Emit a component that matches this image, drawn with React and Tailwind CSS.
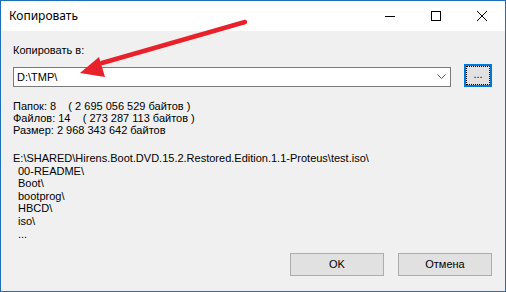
import React from "react";

function TitleBar() {
  return (
    <div className="flex h-[30px] items-center bg-white">
      <span className="ml-[8px] text-[12px] text-black [font-family:'Noto_Sans',sans-serif]">
        Копировать
      </span>
      <div className="ml-auto flex h-full">
        {/* свернуть */}
        <div className="flex w-[46px] items-center justify-center">
          <svg width="10" height="10" viewBox="0 0 10 10">
            <path d="M0 5.5H10" stroke="#000" strokeWidth="1" />
          </svg>
        </div>
        {/* развернуть */}
        <div className="flex w-[46px] items-center justify-center">
          <svg width="10" height="10" viewBox="0 0 10 10">
            <rect x="0.5" y="0.5" width="9" height="9" fill="none" stroke="#000" strokeWidth="1" />
          </svg>
        </div>
        {/* закрыть */}
        <div className="flex w-[46px] items-center justify-center">
          <svg width="10" height="10" viewBox="0 0 10 10">
            <path d="M0 0L10 10M10 0L0 10" stroke="#000" strokeWidth="1" />
          </svg>
        </div>
      </div>
    </div>
  );
}

function WinButton({ children, className = "" }) {
  return (
    <div
      className={
        "flex h-[23px] w-[94px] items-center justify-center border border-[#adadad] bg-[#e1e1e1] text-[11px] text-black " +
        className
      }
    >
      {children}
    </div>
  );
}

export default function App() {
  const items = ["00-README\\", "Boot\\", "bootprog\\", "HBCD\\", "iso\\", "..."];

  return (
    <div className="relative h-[292px] w-[506px] border border-[#1c6fb8] bg-[#f0f0f0] [font-family:'Liberation_Sans',Arial,sans-serif]">
      <TitleBar />

      <div className="px-[12px] pt-[13px]">
        <div className="text-[11px] leading-[13px] text-black">Копировать в:</div>

        <div className="mt-[7px] flex items-end">
          {/* комбобокс */}
          <div className="flex h-[20px] w-[438px] items-center border border-[#7a7a7a] bg-white pl-[3px] pr-[4px]">
            <span className="text-[11px] text-black">D:\TMP\</span>
            <svg className="ml-auto" width="9" height="6" viewBox="0 0 9 6">
              <path d="M0.5 0.5L4.5 4.5L8.5 0.5" fill="none" stroke="#555" strokeWidth="1" />
            </svg>
          </div>

          {/* кнопка обзора */}
          <div className="ml-[13px] flex h-[23px] w-[28px] items-center justify-center border-2 border-[#0078d7] bg-[#e5f1fb]">
            <div className="flex h-full w-full items-end justify-center border border-dotted border-black bg-[#e1e1e1] pb-[4px]">
              <span className="text-[11px] leading-none text-black">...</span>
            </div>
          </div>
        </div>

        <div className="mt-[13px] text-[11px] leading-[12px] text-black">
          <div className="whitespace-pre">Папок: 8    ( 2 695 056 529 байтов )</div>
          <div className="whitespace-pre">Файлов: 14    ( 273 287 113 байтов )</div>
          <div className="whitespace-pre">Размер: 2 968 343 642 байтов</div>
        </div>

        <div className="mt-[16px] text-[11px] leading-[12.6px] text-black">
          <div>E:\SHARED\Hirens.Boot.DVD.15.2.Restored.Edition.1.1-Proteus\test.iso\</div>
          {items.map((t) => (
            <div key={t} className="pl-[5px]">
              {t}
            </div>
          ))}
        </div>
      </div>

      <div className="absolute bottom-[15px] right-[13px] flex gap-[14px]">
        <WinButton>OK</WinButton>
        <WinButton>Отмена</WinButton>
      </div>

      {/* красная стрелка поверх окна */}
      <svg className="pointer-events-none absolute left-0 top-0" width="506" height="292" viewBox="0 0 506 292">
        <path d="M244 21 L101 62" stroke="#e8212a" strokeWidth="4.5" strokeLinecap="round" />
        <polygon points="79,72 98,56 104,76" fill="#e8212a" />
      </svg>
    </div>
  );
}
